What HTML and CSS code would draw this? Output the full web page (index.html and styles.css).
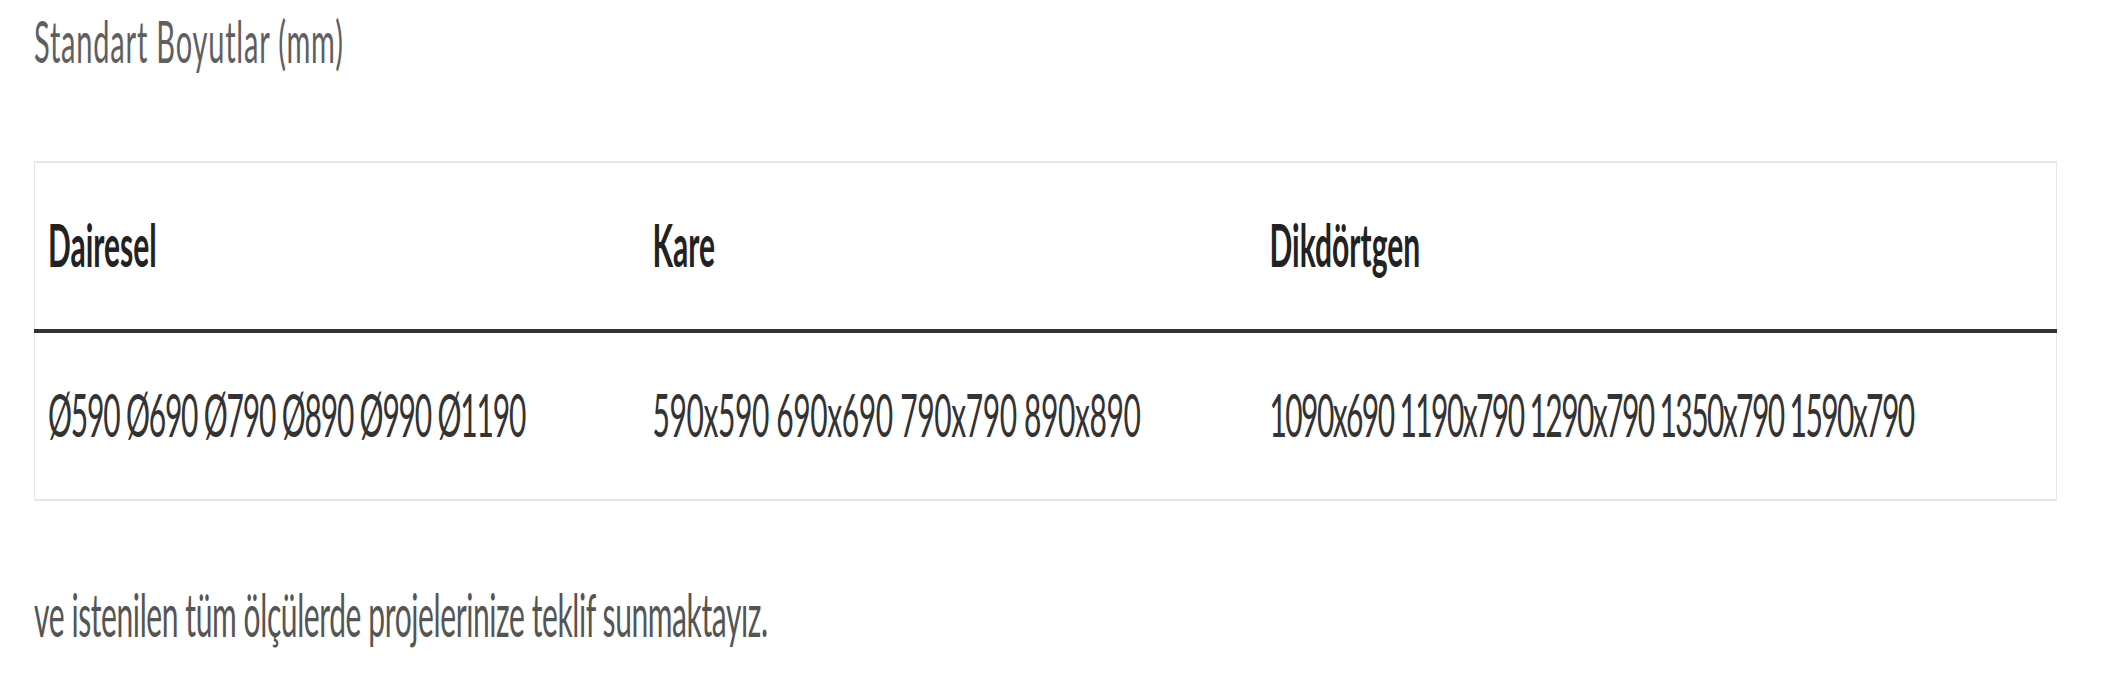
FILE: index.html
```html
<!DOCTYPE html>
<html lang="tr">
<head>
<meta charset="utf-8">
<title>Standart Boyutlar</title>
<link rel="stylesheet" href="styles.css">
</head>
<body>
<div class="page">
  <p class="title">Standart Boyutlar (mm)</p>
  <table class="sizes">
    <colgroup>
      <col class="c1">
      <col class="c2">
      <col class="c3">
    </colgroup>
    <thead>
      <tr><th>Dairesel</th><th>Kare</th><th>Dikdörtgen</th></tr>
    </thead>
    <tbody>
      <tr>
        <td class="round">Ø590 Ø690 Ø790 Ø890 Ø990 Ø1190</td>
        <td class="square">590x590 690x690 790x790 890x890</td>
        <td class="rect">1090x690 1190x790 1290x790 1350x790 1590x790</td>
      </tr>
    </tbody>
  </table>
  <p class="note">ve istenilen tüm ölçülerde projelerinize teklif sunmaktayız.</p>
</div>
</body>
</html>
```
FILE: styles.css
```css
html, body {
  margin: 0;
  padding: 0;
  background: #ffffff;
}

body {
  min-height: 100vh;
}

.page {
  width: 2023px;
  padding-left: 34px;
  font-family: Lato, "Open Sans", sans-serif;
  transform: scaleY(2);
  transform-origin: 0 0;
}

.title {
  margin: 7px 0 0;
  font-size: 29px;
  line-height: 34px;
  font-weight: 400;
  letter-spacing: 0.8px;
  color: #5f5f5f;
}

.sizes {
  width: 2023px;
  margin-top: 42.7px;
  border-collapse: collapse;
  table-layout: fixed;
  border: 1px solid #e4e6e9;
}

.c1 { width: 605px; }
.c2 { width: 617px; }

.sizes th,
.sizes td {
  text-align: left;
  font-size: 30px;
  line-height: 36px;
  padding-left: 13px;
  padding-right: 13px;
  white-space: nowrap;
}

.sizes th {
  font-weight: 700;
  color: #222222;
  padding-top: 22px;
  padding-bottom: 25px;
  border-bottom: 2px solid #333333;
}

.sizes td {
  font-weight: 400;
  color: #333333;
  padding-top: 22px;
  padding-bottom: 25px;
}

.sizes td.round { letter-spacing: -1.2px; }
.sizes td.square { letter-spacing: -0.4px; }
.sizes td.rect { letter-spacing: -1.6px; }

.note {
  margin: 38px 0 0;
  font-size: 30px;
  line-height: 36px;
  letter-spacing: -0.4px;
  color: #555555;
}
```
